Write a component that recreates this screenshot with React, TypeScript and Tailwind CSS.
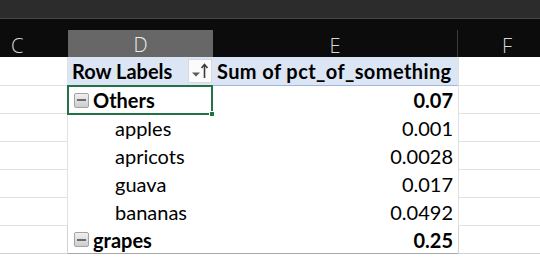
import React from 'react'

type Row = {
  label: string
  value: string
  group?: boolean
  selected?: boolean
  last?: boolean
}

const rows: Row[] = [
  { label: 'Others', value: '0.07', group: true, selected: true },
  { label: 'apples', value: '0.001' },
  { label: 'apricots', value: '0.0028' },
  { label: 'guava', value: '0.017' },
  { label: 'bananas', value: '0.0492' },
  { label: 'grapes', value: '0.25', group: true, last: true },
]

function MinusBox() {
  return (
    <span className="mr-[4px] flex h-[15px] w-[15px] shrink-0 items-center justify-center rounded-[2px] border border-[#a3a3a3] bg-gradient-to-b from-[#f0f0f0] to-[#cdcdcd]">
      <span className="h-[2px] w-[9px] bg-[#6a6a6a]" />
    </span>
  )
}

function SortButton() {
  return (
    <span className="flex h-[24px] w-[24px] shrink-0 items-center justify-center border border-[#d6dae0] bg-[#fbfbfb]">
      <svg width="20" height="20" viewBox="0 0 20 20">
        <path d="M2 11.5h8l-4 4z" fill="#5a5a5a" />
        <path d="M14.5 17V4" stroke="#3a3a3a" strokeWidth="1.6" />
        <path d="M11.5 7l3-3.5 3 3.5" stroke="#3a3a3a" strokeWidth="1.6" fill="none" />
      </svg>
    </span>
  )
}

export default function App() {
  return (
    <div className="h-[259px] w-[540px] overflow-hidden bg-white font-['Lato',sans-serif] text-black">
      <div className="h-[19px] border-b border-[#474747] bg-[#2c2c2c]" />
      <div className="h-[11px] bg-[#0c0c0c]" />

      {/* column letters */}
      <div className="grid h-[27px] grid-cols-[68px_145px_245px_1fr] bg-[#0c0c0c] font-['Open_Sans',sans-serif] text-[20px] font-light text-[#d8d8d8]">
        <div className="flex items-center pl-[11px]">C</div>
        <div className="flex items-center justify-center border-b-2 border-[#2f7a52] bg-[#676767] text-[#ededed]">D</div>
        <div className="flex items-center justify-center border-r border-[#3c3c3c]">E</div>
        <div className="flex items-center pl-[44px]">F</div>
      </div>

      <div className="grid grid-cols-[68px_145px_245px_1fr] text-[20px]">
        {/* pivot header */}
        <div className="h-[29px] border-b border-r border-[#e2e2e2]" />
        <div className="flex h-[29px] items-center justify-between overflow-hidden border-b border-[#9fb6dd] bg-[#dce5f3] pl-[4px] pr-[1px] font-bold">
          <span className="whitespace-nowrap">Row Labels</span>
          <SortButton />
        </div>
        <div className="flex h-[29px] items-center whitespace-nowrap border-b border-[#9fb6dd] bg-[#dce5f3] pl-[4px] font-bold tracking-[0.4px]">
          Sum of pct_of_something
        </div>
        <div className="h-[29px] border-b border-l border-[#e2e2e2]" />

        {rows.map((r) => (
          <React.Fragment key={r.label}>
            <div className={`h-[28px] border-r border-b ${r.last ? 'border-[#d2d2d2]' : 'border-[#e2e2e2]'}`} />
            <div
              className={`relative flex h-[28px] items-center ${r.group ? 'pl-[6px] font-bold' : 'pl-[47px]'} ${r.last ? 'border-b border-[#a8a8a8]' : ''}`}
            >
              {r.group && <MinusBox />}
              <span>{r.label}</span>
              {r.selected && (
                <span className="absolute -left-[1px] -top-[1px] -bottom-[1px] right-0 border-2 border-[#217346]">
                  <span className="absolute -bottom-[4px] -right-[4px] h-[6px] w-[6px] border border-white bg-[#217346]" />
                </span>
              )}
            </div>
            <div
              className={`flex h-[28px] items-center justify-end pr-[5px] ${r.group ? 'font-bold' : ''} ${r.last ? 'border-b border-[#a8a8a8]' : ''}`}
            >
              {r.value}
            </div>
            <div className={`h-[28px] border-b border-l ${r.last ? 'border-[#d2d2d2]' : 'border-[#e2e2e2]'}`} />
          </React.Fragment>
        ))}
      </div>
    </div>
  )
}
